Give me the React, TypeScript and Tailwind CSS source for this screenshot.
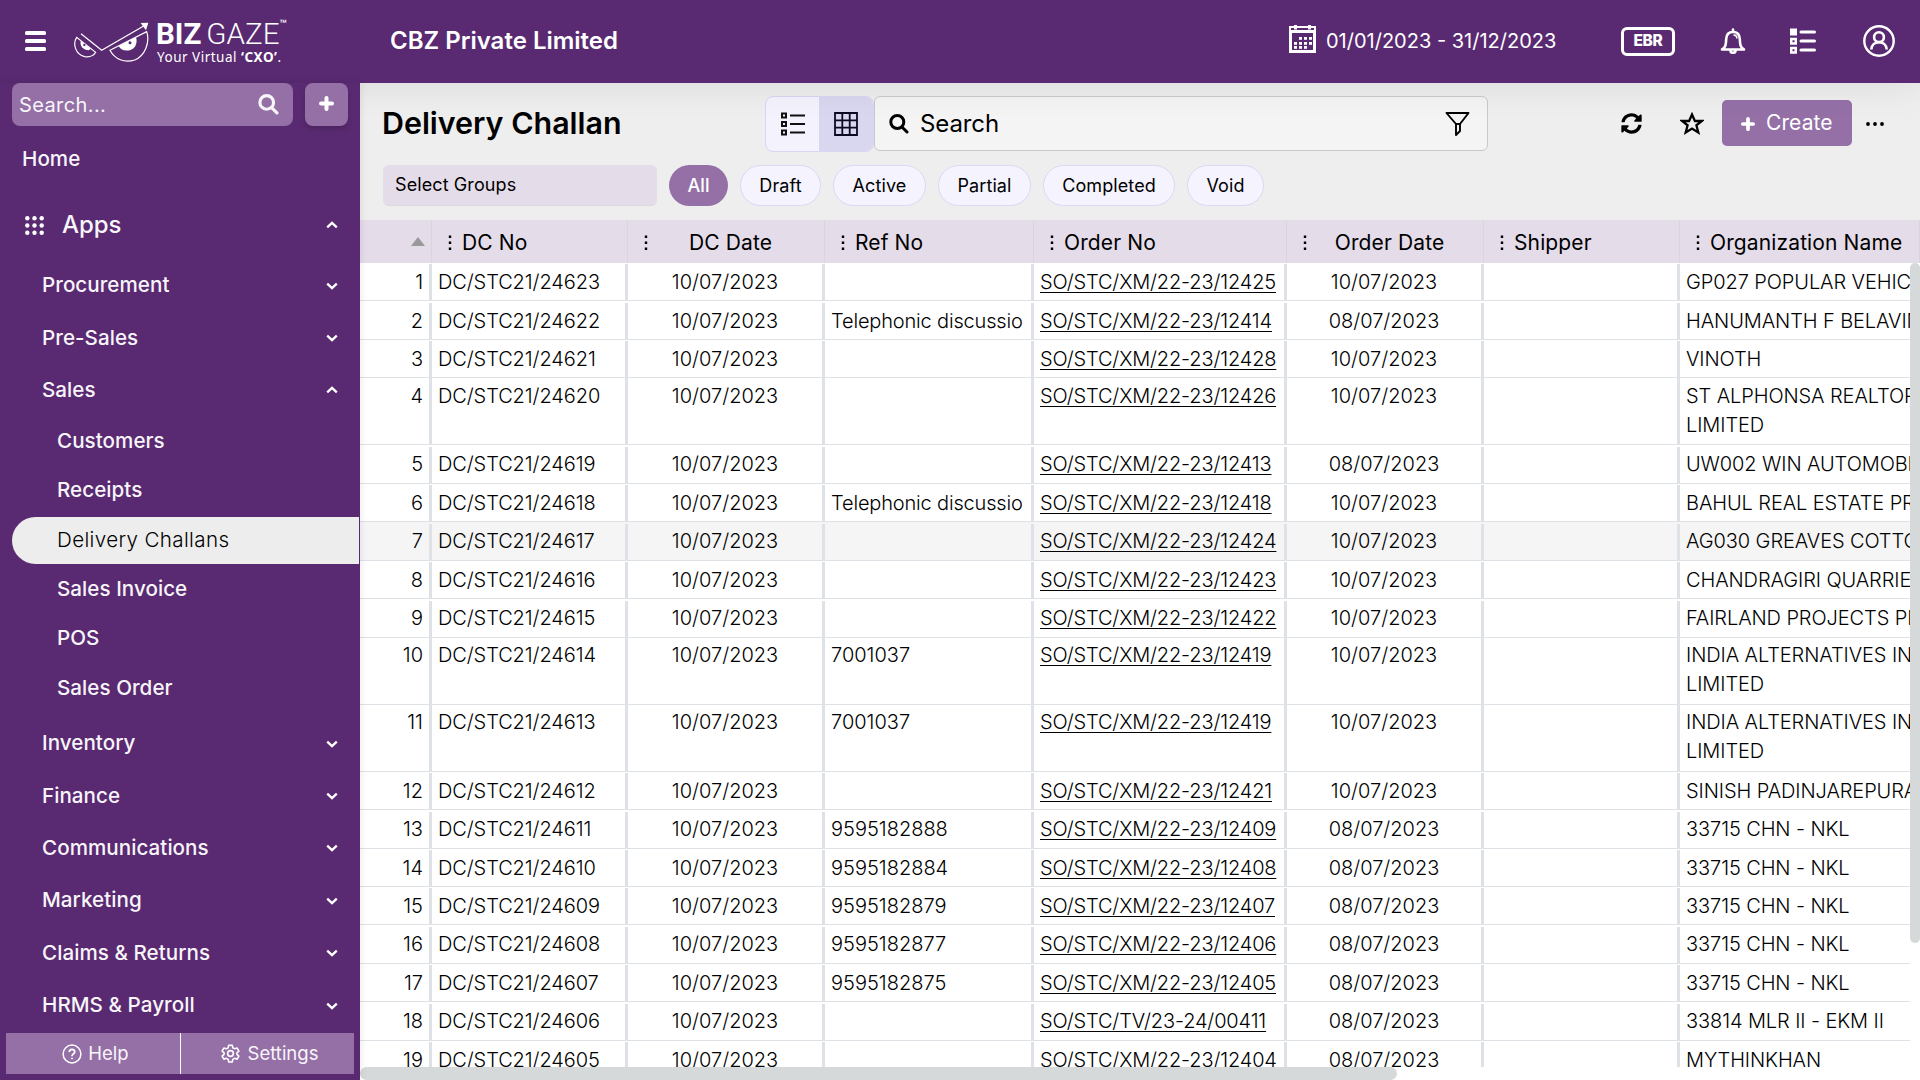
import type { ReactNode } from "react";
import { FaSyncAlt } from "react-icons/fa";

type Column = { name: string; width: string; center?: boolean };

const columns: Column[] = [
  { name: "DC No", width: "w-[196px]" },
  { name: "DC Date", width: "w-[197px]", center: true },
  { name: "Ref No", width: "w-[209px]" },
  { name: "Order No", width: "w-[253px]" },
  { name: "Order Date", width: "w-[197px]", center: true },
  { name: "Shipper", width: "w-[196px]" },
  { name: "Organization Name", width: "w-[240px]" },
];

type Size = "short" | "tall" | "tallLow" | "double" | "doubleLow";

const sizes: Record<Size, { row: string; pad: string; rule: string }> = {
  short: { row: "h-[38px]", pad: "pt-[5px]", rule: "mt-px" },
  tall: { row: "h-[39px]", pad: "pt-[5px]", rule: "mt-[2px]" },
  tallLow: { row: "h-[39px]", pad: "pt-[6px]", rule: "mt-[2px]" },
  double: { row: "h-[67px]", pad: "pt-[3px]", rule: "mt-0" },
  doubleLow: { row: "h-[67px]", pad: "pt-[4px]", rule: "mt-0" },
};

const D10 = "10/07/2023";
const D8 = "08/07/2023";

type Row = { size: Size; ref?: string; order: string; date: string; org: string[]; active?: boolean };

const rows: Row[] = [
  { size: "short", order: "SO/STC/XM/22-23/12425", date: D10, org: ["GP027 POPULAR VEHIC"] },
  { size: "tallLow", ref: "Telephonic discussio", order: "SO/STC/XM/22-23/12414", date: D8, org: ["HANUMANTH F BELAVIN"] },
  { size: "short", order: "SO/STC/XM/22-23/12428", date: D10, org: ["VINOTH"] },
  { size: "doubleLow", order: "SO/STC/XM/22-23/12426", date: D10, org: ["ST ALPHONSA REALTOR", "LIMITED"] },
  { size: "tall", order: "SO/STC/XM/22-23/12413", date: D8, org: ["UW002 WIN AUTOMOBI"] },
  { size: "short", ref: "Telephonic discussio", order: "SO/STC/XM/22-23/12418", date: D10, org: ["BAHUL REAL ESTATE PR"] },
  { size: "tall", order: "SO/STC/XM/22-23/12424", date: D10, org: ["AG030 GREAVES COTTO"], active: true },
  { size: "short", order: "SO/STC/XM/22-23/12423", date: D10, org: ["CHANDRAGIRI QUARRIES"] },
  { size: "tall", order: "SO/STC/XM/22-23/12422", date: D10, org: ["FAIRLAND PROJECTS PR"] },
  { size: "double", ref: "7001037", order: "SO/STC/XM/22-23/12419", date: D10, org: ["INDIA ALTERNATIVES IN", "LIMITED"] },
  { size: "double", ref: "7001037", order: "SO/STC/XM/22-23/12419", date: D10, org: ["INDIA ALTERNATIVES IN", "LIMITED"] },
  { size: "short", order: "SO/STC/XM/22-23/12421", date: D10, org: ["SINISH PADINJAREPURA"] },
  { size: "tall", ref: "9595182888", order: "SO/STC/XM/22-23/12409", date: D8, org: ["33715 CHN - NKL"] },
  { size: "short", ref: "9595182884", order: "SO/STC/XM/22-23/12408", date: D8, org: ["33715 CHN - NKL"] },
  { size: "short", ref: "9595182879", order: "SO/STC/XM/22-23/12407", date: D8, org: ["33715 CHN - NKL"] },
  { size: "tall", ref: "9595182877", order: "SO/STC/XM/22-23/12406", date: D8, org: ["33715 CHN - NKL"] },
  { size: "short", ref: "9595182875", order: "SO/STC/XM/22-23/12405", date: D8, org: ["33715 CHN - NKL"] },
  { size: "tall", order: "SO/STC/TV/23-24/00411", date: D8, org: ["33814 MLR II - EKM II"] },
  { size: "short", order: "SO/STC/XM/22-23/12404", date: D8, org: ["MYTHINKHAN"] },
];

function Logo() {
  return (
    <div className="flex h-[83px] w-[220px] text-white">
      <svg className="mt-[21px] h-[42px] w-[77px] shrink-0" viewBox="40 35 231 126" fill="none" stroke="white" strokeWidth="3.6">
        <path d="M64 73 L126 123 L252 50" />
        <path d="M243 41 L266 40 L259 63 Z" fill="white" stroke="none" />
        <path d="M51 84 C39 102 46 135 75 142 C92 144 103 138 108 129 Z" />
        <path d="M151 123 L261 67 C272 100 255 140 225 152 C195 162 165 150 151 123 Z" />
        <path d="M63 95 C60 110 70 122 88 123 L93 118 Z" fill="white" stroke="none" />
        <path d="M177 110 C184 125 205 128 220 118 C230 111 233 96 229 84 Z" fill="white" stroke="none" />
        <circle cx="211" cy="100" r="4.5" fill="#592a71" stroke="none" />
        <circle cx="74" cy="107" r="3.5" fill="#592a71" stroke="none" />
      </svg>
      <div className="ml-[6px] pt-[19px] font-['Roboto',sans-serif] leading-none">
        <div className="flex h-[30px]">
          <span className="text-[29.5px] font-bold leading-[30px]">BIZ</span>
          <span className="ml-[5px] text-[29.5px] font-[350] leading-[30px]">GAZE</span>
          <span className="text-[12px] font-medium leading-[10px]">™</span>
        </div>
        <div className="ml-px whitespace-nowrap font-['Noto_Sans',sans-serif] text-[13.5px] leading-[16px] tracking-[0.5px]">
          Your Virtual <b>‘CXO’</b>.
        </div>
      </div>
    </div>
  );
}

function CalendarIcon() {
  const dots = [[10, 12], [15, 12], [20, 12], [5, 17], [10, 17], [15, 17], [20, 17], [5, 21], [10, 21], [15, 21]];
  return (
    <svg className="h-[28px] w-[27px]" viewBox="0 0 27 28" fill="white">
      <path fillRule="evenodd" d="M0 1H5V0H8V1H19V0H22V1H27V28H0ZM2 3V5H25V3H22V4.500H19V3H8V4.500H5V3ZM3 8V25H24V8Z" />
      {dots.map(([x, y]) => <rect key={`${x}-${y}`} x={x} y={y} width="3" height="2.800" />)}
    </svg>
  );
}

function BellIcon() {
  return (
    <svg className="h-[26px] w-[26px]" viewBox="0 0 26 26" fill="none" stroke="white" strokeWidth="2.600" strokeLinejoin="round" strokeLinecap="round">
      <path d="M13 1.500V4M2 21.500C5.500 19.500 6 17 6.200 11C6.400 6.500 9 4 13 4C17 4 19.600 6.500 19.800 11C20 17 20.500 19.500 24 21.500Z" />
      <path d="M10.500 22.500C10.500 25.500 15.500 25.500 15.500 22.500" />
      <path d="M14 7C16 7.200 16.800 8.500 16.900 10" strokeWidth="1.500" />
    </svg>
  );
}

function TaskListIcon() {
  return (
    <svg className="h-[26px] w-[26px]" viewBox="0 0 26 26" fill="none" stroke="white">
      <rect x="0" y="0.500" width="7" height="7" fill="white" stroke="none" />
      <rect x="1.250" y="11" width="4.500" height="4.500" strokeWidth="2.500" />
      <rect x="1.250" y="20" width="4.500" height="4.500" strokeWidth="2.500" />
      <path d="M11 4H24.500M11 13H24.500M11 22H24.500" strokeWidth="3" strokeLinecap="round" />
    </svg>
  );
}

function UserIcon() {
  return (
    <svg className="size-8" viewBox="0 0 32 32" fill="none" stroke="white" strokeWidth="2.400">
      <circle cx="16" cy="16" r="14.700" />
      <circle cx="16" cy="12.200" r="4.900" strokeWidth="2.600" />
      <path d="M8.300 24.500C8.800 14.800 23.200 14.800 23.700 24.500" strokeWidth="2.600" />
    </svg>
  );
}

function SearchIcon({ className }: { className: string }) {
  return (
    <svg className={className} viewBox="0 0 20 20" fill="none" stroke="currentColor" strokeWidth="3" strokeLinecap="round">
      <circle cx="8.300" cy="8" r="6.500" />
      <path d="M13.200 13.200L18 18" />
    </svg>
  );
}

function PlusIcon({ className }: { className: string }) {
  return (
    <svg className={className} viewBox="0 0 15 15" fill="none" stroke="white" strokeWidth="4" strokeLinecap="round">
      <path d="M7.500 2V13M2 7.500H13" />
    </svg>
  );
}

function Chevron({ up, className = "" }: { up?: boolean; className?: string }) {
  return (
    <svg className={`h-[8px] w-[12px] ${className}`} viewBox="0 0 12 8" fill="none" stroke="white" strokeWidth="2.300">
      <path d={up ? "M1.200 6.300L6 1.800L10.800 6.300" : "M1.200 1.700L6 6.200L10.800 1.700"} />
    </svg>
  );
}

function KebabIcon() {
  return (
    <svg className="h-[16px] w-[4px] shrink-0" viewBox="0 0 4 16">
      <rect x="0.800" y="0.500" width="2.400" height="2.500" />
      <rect x="0.800" y="6.500" width="2.400" height="2.500" />
      <rect x="0.800" y="12.500" width="2.400" height="2.500" />
    </svg>
  );
}

function Section({ name, open }: { name: string; open?: boolean }) {
  return (
    <div className="flex h-[52.4px] items-center justify-between pl-[42px] pr-[22px]">
      <span>{name}</span>
      <Chevron up={open} />
    </div>
  );
}

function Cell({ size, width, className = "", children }: { size: Size; width: string; className?: string; children?: ReactNode }) {
  const s = sizes[size];
  return (
    <div className={`flex shrink-0 ${width}`}>
      <div className={`min-w-0 flex-1 overflow-hidden whitespace-nowrap ${s.pad} ${className}`}>{children}</div>
      <div className={`w-[3px] bg-[#dee2e6] ${s.rule}`} />
    </div>
  );
}

function Sidebar() {
  return (
    <aside className="relative z-20 flex w-[360px] shrink-0 flex-col bg-[#592a71] text-[20.600px] font-[480] tracking-[0.05px] text-[#f8f5fa] shadow-[0_0_8px_rgba(0,0,0,0.1)]">
      <div className="flex gap-3 pl-3 tracking-normal">
        <div className="flex h-[43px] w-[281px] items-center justify-between rounded-lg bg-[#9470a6] pl-[7px] pr-[14px]">
          <span className="text-[20px] font-normal tracking-[0.4px]">Search...</span>
          <SearchIcon className="size-[21px]" />
        </div>
        <div className="grid h-[43px] w-[43px] place-items-center rounded-lg bg-[#9470a6] pb-[3px] shadow-[0_3px_5px_rgba(0,0,0,0.15)]">
          <PlusIcon className="size-[15px]" />
        </div>
      </div>
      <div className="mt-[18px] pl-[22px] leading-[30px]">Home</div>
      <div className="mt-[31px] mb-[14.500px] flex h-[40px] items-center pl-[25px] pr-[22px]">
        <svg className="size-[19px]" viewBox="0 0 19 19" fill="white">
          {[2.3, 9.5, 16.7].map((y) => [2.3, 9.5, 16.7].map((x) => <circle key={`${x}${y}`} cx={x} cy={y} r="2.200" />))}
        </svg>
        <span className="ml-[18px] flex-1 text-[24px] font-medium tracking-[-0.1px]">Apps</span>
        <Chevron up />
      </div>
      <Section name="Procurement" />
      <Section name="Pre-Sales" />
      <Section name="Sales" open />
      {["Customers", "Receipts", "Delivery Challans", "Sales Invoice", "POS", "Sales Order"].map((name) =>
        name === "Delivery Challans" ? (
          <div key={name} className="flex h-[49.4px] items-center pl-3 pr-px">
            <div className="flex h-[47px] flex-1 items-center rounded-l-full bg-[#ededed] pl-[45px] font-light tracking-[0.35px] text-black">{name}</div>
          </div>
        ) : (
          <div key={name} className="flex h-[49.4px] items-center pl-[57px]">{name}</div>
        ),
      )}
      <div className="h-[4.500px]" />
      {["Inventory", "Finance", "Communications", "Marketing", "Claims & Returns", "HRMS & Payroll"].map((name) => (
        <Section key={name} name={name} />
      ))}
      <div className="mx-[6px] mt-[1px] flex h-[41px] shrink-0 bg-[#9470a6] text-[18.500px] font-normal tracking-normal">
        <div className="flex w-[175px] items-center justify-center gap-[6px] border-r border-white pl-[5px] pt-px">
          <svg className="size-[20px]" viewBox="0 0 20 20" fill="none" stroke="white" strokeWidth="1.500">
            <circle cx="10" cy="10" r="8.900" />
            <path d="M7.300 8C7.300 4.500 12.700 4.500 12.700 7.800C12.700 9.800 10 10 10 12.200" strokeWidth="1.800" />
            <circle cx="10" cy="14.500" r="0.600" fill="white" strokeWidth="1" />
          </svg>
          Help
        </div>
        <div className="flex flex-1 items-center justify-center gap-[8px] pl-[4px] pt-px">
          <svg className="size-[19px]" viewBox="0 0 24 24" fill="none" stroke="white" strokeWidth="2" strokeLinejoin="round">
            <circle cx="12" cy="12" r="3.600" />
            <path d="M9.800 1.500h4.400l.7 3.300 2.300 1.300 3.200-1 2.200 3.800-2.500 2.200v2.000l2.500 2.200-2.200 3.800-3.200-1-2.300 1.300-.7 3.300H9.800l-.7-3.300-2.300-1.300-3.200 1-2.200-3.800 2.500-2.200v-2.000L1.400 8.900l2.200-3.800 3.200 1 2.300-1.300z" />
          </svg>
          Settings
        </div>
      </div>
    </aside>
  );
}

function Toolbar() {
  return (
    <div className="h-[137px] shrink-0 pl-[23px]">
      <div className="flex h-[81px] items-center">
        <h2 className="-ml-px w-[383px] text-[30.400px] font-semibold">Delivery Challan</h2>
        <div className="flex h-[56px] w-[109px] overflow-hidden rounded-lg border border-[#d9d6f3] bg-[#f4f2fd]">
          <div className="flex w-[53px] items-center pl-[15px]">
            <svg className="size-[24px]" viewBox="0 0 24 24" fill="none" stroke="#111" strokeWidth="2">
              <path d="M1 1.500H5V5.500H1ZM1 10H5V14H1ZM1 18.500H5V22.500H1Z" />
              <path d="M9 3.500H24M9 12H24M9 20.500H24" />
            </svg>
          </div>
          <div className="flex flex-1 items-center bg-[#d9d6ef] pl-[15px]">
            <svg className="size-[24px]" viewBox="0 0 24 24" fill="none" stroke="#0a0a20" strokeWidth="1.800">
              <path d="M1 1H23V23H1ZM1 8.300H23M1 15.700H23M8.300 1V23M15.700 1V23" />
            </svg>
          </div>
        </div>
        <div className="flex h-[55px] w-[614px] items-center rounded-md border border-[#c9c9c9] bg-[#f4f4f4] pl-[14px] pr-[17px]">
          <SearchIcon className="size-[20px]" />
          <span className="ml-[11px] flex-1 text-[24px] font-[380] tracking-[-0.1px]">Search</span>
          <svg className="size-[25px]" viewBox="0 0 25 25" fill="none" stroke="#000" strokeWidth="1.900" strokeLinejoin="round">
            <path d="M1.500 2H23.500L15 13V20L11 24V13Z" />
            <path d="M11 13H15" />
          </svg>
        </div>
        <FaSyncAlt className="ml-[133px] size-[21px]" />
        <svg className="ml-[38px] size-[24px]" viewBox="0 0 24 24" fill="none" stroke="black" strokeWidth="2.300">
          <path d="M12 2.500L14.900 9H21.800L16.400 13.300L18.300 20.500L12 16.500L5.700 20.500L7.600 13.300L2.200 9H9.100Z" />
        </svg>
        <button className="ml-[18px] mb-px flex h-[46px] w-[130px] items-center rounded-[5px] bg-[#9470a6] pl-[19px] text-[21px] text-white">
          <PlusIcon className="mt-[2px] size-[14px]" />
          <span className="ml-[11px] tracking-[0.1px]">Create</span>
        </button>
        <svg className="ml-[14px] h-[4px] w-[18px]" viewBox="0 0 18 4">
          <circle cx="2" cy="2" r="1.900" /><circle cx="9" cy="2" r="1.900" /><circle cx="16" cy="2" r="1.900" />
        </svg>
      </div>
      <div className="mt-px flex h-[41px] gap-3 text-[18px]">
        <div className="w-[274px] rounded-md border-b border-[#dcd8e0] bg-[#e4dce9] pl-3 leading-[39px] tracking-[0.1px]">Select Groups</div>
        <div className="w-[59px] rounded-full bg-[#9470a6] text-center font-medium leading-[41px] text-white">All</div>
        <Pill width="w-[81px]" name="Draft" />
        <Pill width="w-[93px]" name="Active" />
        <Pill width="w-[93px]" name="Partial" />
        <Pill width="w-[132px]" name="Completed" />
        <Pill width="w-[77px]" name="Void" />
      </div>
    </div>
  );
}

function Pill({ name, width }: { name: string; width: string }) {
  return <div className={`${width} rounded-full border border-[#dbd7f4] bg-[#f5f3fe] text-center leading-[40px] tracking-[0.1px]`}>{name}</div>;
}

export default function App() {
  return (
    <div className="flex h-[1080px] w-[1920px] flex-col overflow-hidden bg-[#eee] font-['Inter',sans-serif] text-black">
      <header className="relative z-10 flex h-[83px] shrink-0 items-center bg-[#592a71] pr-[25px] text-white shadow-[0_0_40px_rgba(0,0,0,0.09)]">
        <svg className="mb-[2px] ml-[25px] h-[20px] w-[21px]" viewBox="0 0 21 20" fill="white">
          <rect width="21" height="4" rx="1.500" /><rect y="8" width="21" height="4" rx="1.500" /><rect y="16" width="21" height="4" rx="1.500" />
        </svg>
        <div className="ml-[27px]"><Logo /></div>
        <h1 className="ml-[97px] flex-1 pb-[2px] text-[24px] font-semibold">CBZ Private Limited</h1>
        <div className="mr-px pb-[5px]"><CalendarIcon /></div>
        <span className="ml-[9px] w-[230px] whitespace-nowrap pb-px text-[20px]">01/01/2023 - 31/12/2023</span>
        <div className="ml-[65px] mr-px h-[29px] w-[54px] rounded-md border-[3px] border-white text-center text-[15.500px] font-extrabold leading-[22px] tracking-[-0.3px]">EBR</div>
        <div className="mb-[2px] ml-[44px]"><BellIcon /></div>
        <div className="mb-[2px] ml-[44px]"><TaskListIcon /></div>
        <div className="mb-[2px] ml-[47px]"><UserIcon /></div>
      </header>
      <div className="flex min-h-0 flex-1">
        <Sidebar />
        <main className="flex min-w-0 flex-1 flex-col">
          <Toolbar />
          <div className="flex h-[43px] shrink-0 overflow-hidden bg-[#e4dce9] text-[21px] tracking-[0.12px]">
            <div className="flex w-[72px] items-center justify-end border-r border-[#d9d5dc] pr-[6px]">
              <svg className="h-[9px] w-[14px]" viewBox="0 0 14 9"><path d="M0 9L7 0L14 9Z" fill="#999" /></svg>
            </div>
            {columns.map((c) => (
              <div key={c.name} className={`${c.width} flex shrink-0 items-center whitespace-nowrap border-r border-[#d9d5dc] pl-[16px] pt-[3px]`}>
                <KebabIcon />
                {c.center ? <span className="flex-1 pr-[11px] text-center">{c.name}</span> : <span className="ml-[10px]">{c.name}</span>}
              </div>
            ))}
          </div>
          <div className="flex h-[804px] shrink-0 bg-white">
            <div className="w-[1550px] overflow-hidden text-[20px] font-light leading-[29px]">
              {rows.map((r, i) => (
                <div key={24623 - i} className={`flex ${sizes[r.size].row} border-b border-[#dee2e6] ${r.active ? "bg-[#f5f5f5]" : ""}`}>
                  <Cell size={r.size} width="w-[72px]" className="pr-[6px] text-right">{i + 1}</Cell>
                  <Cell size={r.size} width="w-[196px]" className="pl-[6px] tracking-[-0.1px]">{`DC/STC21/${24623 - i}`}</Cell>
                  <Cell size={r.size} width="w-[197px]" className="text-center">{D10}</Cell>
                  <Cell size={r.size} width="w-[209px]" className="pl-[6px]">
                    <span className={r.ref?.startsWith("T") ? "tracking-[-0.17px]" : ""}>{r.ref}</span>
                  </Cell>
                  <Cell size={r.size} width="w-[253px]" className="pl-[6px] tracking-[-0.16px] underline decoration-1 underline-offset-[3px]">{r.order}</Cell>
                  <Cell size={r.size} width="w-[197px]" className="text-center">{r.date}</Cell>
                  <Cell size={r.size} width="w-[196px]" />
                  <div className={`min-w-0 flex-1 overflow-hidden whitespace-nowrap pl-[6px] tracking-[-0.1px] ${sizes[r.size].pad}`}>
                    {r.org.map((line) => <div key={line}>{line}</div>)}
                  </div>
                </div>
              ))}
            </div>
            <div className="h-[680px] w-[10px] rounded-full bg-[#d5d9d9]" />
          </div>
          <div className="h-[13px] shrink-0 bg-white">
            <div className="h-[13px] w-[1037px] rounded-full bg-[#d5d9d9]" />
          </div>
        </main>
      </div>
    </div>
  );
}
